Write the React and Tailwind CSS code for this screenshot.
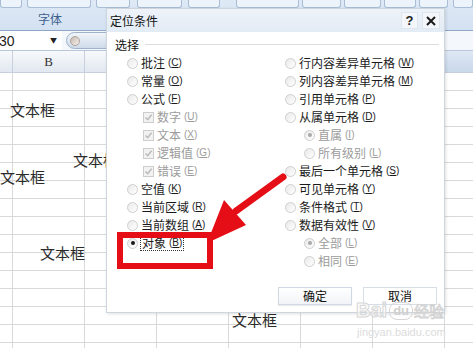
import React from "react";

const cjk = "font-['Noto_Sans_CJK_SC','Noto_Sans',sans-serif]";

function Radio({ checked, dim }) {
  return (
    <span className="w-[11px] h-[11px] shrink-0 rounded-full border border-[#cfcfcf] bg-gradient-to-br from-[#e9e9e9] to-white flex items-center justify-center">
      {checked && (
        <span className={`w-[4px] h-[4px] rounded-full ${dim ? "bg-[#a8a8a8]" : "bg-[#1a1a1a]"}`} />
      )}
    </span>
  );
}

function Check() {
  return (
    <span className="w-[11px] h-[11px] shrink-0 border border-[#cdcdcd] bg-[#f2f2f2] flex items-center justify-center">
      <svg width="9" height="9" viewBox="0 0 9 9">
        <path d="M1.5 4.5 L3.7 6.8 L7.6 1.8" fill="none" stroke="#b9b9b9" strokeWidth="1.4" />
      </svg>
    </span>
  );
}

function Key({ k }) {
  return (
    <span className="ml-[3px] text-[10px] font-['Liberation_Sans',sans-serif]">
      (<span className="underline">{k}</span>)
    </span>
  );
}

function Opt({ label, k, type = "radio", checked, dim, indent = "", focus }) {
  const color = dim ? "text-[#9c9c9c]" : "text-[#1a1a1a]";
  return (
    <div className={`flex items-center h-[18px] gap-[3px] ${indent}`}>
      {type === "radio" ? <Radio checked={checked} dim={dim} /> : <Check />}
      <span
        className={`flex items-center text-[12px] leading-[14px] ${color} ${
          focus ? "outline outline-1 outline-dotted outline-[#333] outline-offset-[0px] px-[1px]" : ""
        }`}
      >
        {label}
        <Key k={k} />
      </span>
    </div>
  );
}

function Row({ header }) {
  const base = header
    ? "h-[22px] border-b border-[#c6cfdb] bg-gradient-to-b from-[#f7f9fc] to-[#e2e8f0]"
    : "h-[18px] border-b border-[#d9d9d9]";
  const vr = header ? "border-r border-[#c6cfdb]" : "border-r border-[#d9d9d9]";
  return (
    <div className={`flex ${base}`}>
      <div className={`w-[13px] shrink-0 ${vr}`} />
      <div className={`w-[72px] shrink-0 ${vr} flex items-center justify-center`}>
        {header && (
          <span className="text-[13px] text-[#333] font-['Liberation_Serif',serif]">B</span>
        )}
      </div>
      <div className={`w-[72px] shrink-0 ${vr}`} />
      <div className={`w-[72px] shrink-0 ${vr}`} />
      <div className={`w-[72px] shrink-0 ${vr}`} />
      <div className={`w-[72px] shrink-0 ${vr}`} />
      <div className={`w-[72px] shrink-0 ${vr}`} />
      <div className={`flex-1 ${header ? "bg-gradient-to-b from-[#dfe8f4] to-[#c9d8eb]" : ""}`} />
    </div>
  );
}

export default function App() {
  const rows = Array.from({ length: 16 });
  return (
    <div className={`relative w-[473px] h-[348px] overflow-hidden bg-white ${cjk}`}>
      {/* Ribbon */}
      <div className="h-[30px] bg-gradient-to-b from-[#dfe9f6] to-[#d3e1f2] flex flex-col">
        <div className="h-[8px] flex">
          <div className="w-[22px] border border-t-0 border-[#a9bdd6] rounded-b-[3px] bg-[#edf3fa]" />
          <div className="ml-[5px] w-[65px] border border-t-0 border-[#a9bdd6] rounded-b-[3px] bg-[#edf3fa]" />
          <div className="ml-[5px] w-[34px] border border-t-0 border-[#a9bdd6] rounded-b-[3px] bg-[#edf3fa]" />
          <div className="ml-[7px] w-[46px] border border-t-0 border-[#a9bdd6] rounded-b-[3px] bg-[#edf3fa]" />
          <div className="ml-[6px] w-[32px] border border-t-0 border-[#a9bdd6] rounded-b-[3px] bg-[#edf3fa]" />
          <div className="ml-[16px] w-[64px] border border-t-0 border-[#a9bdd6] rounded-b-[3px] bg-[#edf3fa]" />
          <div className="ml-[3px] w-[40px] border border-t-0 border-[#a9bdd6] rounded-b-[3px] bg-[#edf3fa]" />
          <div className="ml-[3px] w-[37px] border border-t-0 border-[#a9bdd6] rounded-b-[3px] bg-[#edf3fa]" />
          <div className="ml-[3px] w-[32px] border border-t-0 border-[#a9bdd6] rounded-b-[3px] bg-[#edf3fa]" />
          <div className="ml-[3px] w-[30px] border border-t-0 border-[#a9bdd6] rounded-b-[3px] bg-[#edf3fa]" />
          <div className="ml-[5px] w-[20px] border border-t-0 border-[#a9bdd6] rounded-b-[3px] bg-[#edf3fa]" />
        </div>
        <div className="h-[22px] flex items-center pl-[38px]">
          <span className="text-[12px] leading-[14px] text-[#3e5f8c]">字体</span>
        </div>
      </div>
      <div className="h-px bg-[#8ea7c6]" />
      {/* Formula bar */}
      <div className="h-[19px] flex items-center bg-[#f4f7fb]">
        <div className="w-[62px] h-full bg-white flex items-center">
          <span className="text-[14px] leading-[16px] text-[#222] font-['Liberation_Sans',sans-serif] -ml-[1px]">
            30
          </span>
          <span className="ml-auto mr-[5px] text-[7px] text-[#222]">▼</span>
        </div>
        <div className="ml-[4px] w-[70px] h-[17px] rounded-full border border-[#9fb2cb] bg-gradient-to-b from-[#f1f5fa] to-[#cfdbea] flex items-center pl-[3px]">
          <span className="w-[10px] h-[10px] rounded-full bg-gradient-to-br from-[#c7b9b0] to-[#f6f2ee] border border-[#b0a39a]" />
        </div>
      </div>
      <div className="h-px bg-[#b8c6d8]" />
      {/* Grid */}
      <Row header />
      {rows.map((_, i) => (
        <Row key={i} />
      ))}

      {/* Floating text boxes on the sheet */}
      <span className="absolute left-[10px] top-[101px] text-[15px] leading-[18px] text-[#2a2a2a]">文本框</span>
      <span className="absolute left-[73px] top-[151px] text-[15px] leading-[18px] text-[#2a2a2a]">文本框</span>
      <span className="absolute left-[0px] top-[168px] text-[15px] leading-[18px] text-[#2a2a2a]">文本框</span>
      <span className="absolute left-[40px] top-[244px] text-[15px] leading-[18px] text-[#2a2a2a]">文本框</span>
      <span className="absolute left-[232px] top-[311px] text-[15px] leading-[18px] text-[#2a2a2a]">文本框</span>

      {/* Dialog */}
      <div className="absolute left-[106px] top-[8px] w-[339px] h-[305px] bg-white border border-[#cdd5de] shadow-[1px_1px_3px_rgba(0,0,0,0.12)] flex flex-col z-10">
        <div className="h-[23px] bg-gradient-to-b from-[#eef3f9] to-[#e3ebf5] flex items-center pl-[3px] pr-[4px]">
          <span className="text-[12px] leading-[14px] text-[#111]">定位条件</span>
          <div className="ml-auto flex gap-[4px]">
            <span className="w-[17px] h-[17px] flex items-center justify-center text-[13px] font-bold text-[#222] font-['Liberation_Sans',sans-serif] border border-[#dfe6ee] bg-[#f3f6fa]">
              ?
            </span>
            <span className="w-[18px] h-[17px] flex items-center justify-center border border-[#dfe6ee] bg-[#f3f6fa]">
              <svg width="10" height="10" viewBox="0 0 10 10">
                <path d="M1 1 L9 9 M9 1 L1 9" stroke="#1a1a1a" strokeWidth="2" />
              </svg>
            </span>
          </div>
        </div>
        <div className="mt-[5px] h-[16px] flex items-center pl-[8px] pr-[5px]">
          <span className="text-[12px] leading-[14px] text-[#111]">选择</span>
          <div className="flex-1 h-px bg-[#dedede] ml-[6px] -mt-[2px]" />
        </div>
        <div className="mt-[1px] flex">
          <div className="w-[178px] pl-[20px] flex flex-col">
            <Opt label="批注" k="C" />
            <Opt label="常量" k="O" />
            <Opt label="公式" k="F" />
            <Opt label="数字" k="U" type="check" dim indent="pl-[16px]" />
            <Opt label="文本" k="X" type="check" dim indent="pl-[16px]" />
            <Opt label="逻辑值" k="G" type="check" dim indent="pl-[16px]" />
            <Opt label="错误" k="E" type="check" dim indent="pl-[16px]" />
            <Opt label="空值" k="K" />
            <Opt label="当前区域" k="R" />
            <Opt label="当前数组" k="A" />
            <Opt label="对象" k="B" checked focus />
          </div>
          <div className="flex-1 flex flex-col">
            <Opt label="行内容差异单元格" k="W" />
            <Opt label="列内容差异单元格" k="M" />
            <Opt label="引用单元格" k="P" />
            <Opt label="从属单元格" k="D" />
            <Opt label="直属" k="I" checked dim indent="pl-[19px]" />
            <Opt label="所有级别" k="L" dim indent="pl-[19px]" />
            <Opt label="最后一个单元格" k="S" />
            <Opt label="可见单元格" k="Y" />
            <Opt label="条件格式" k="T" />
            <Opt label="数据有效性" k="V" />
            <Opt label="全部" k="L" checked dim indent="pl-[19px]" />
            <Opt label="相同" k="E" dim indent="pl-[19px]" />
          </div>
        </div>
        <div className="mt-[17px] flex justify-end gap-[11px] pr-[7px]">
          <button className="w-[74px] h-[18px] border border-[#cfd9e3] bg-gradient-to-b from-white to-[#f1f4f7] shadow-[0_1px_1px_rgba(0,0,0,0.08)] text-[12px] leading-[14px] text-[#111] flex items-center justify-center">
            确定
          </button>
          <button className="w-[74px] h-[18px] border border-[#d7dee6] bg-white text-[12px] leading-[14px] text-[#111] flex items-center justify-center">
            取消
          </button>
        </div>
      </div>

      {/* Red annotation */}
      <div className="absolute left-[117px] top-[232px] w-[96px] h-[37px] border-[6px] border-[#e50d16] z-20" />
      <svg className="absolute left-0 top-0 z-20 pointer-events-none" width="473" height="348" viewBox="0 0 473 348">
        <line x1="283" y1="177" x2="236" y2="211" stroke="#e50d16" strokeWidth="7" strokeLinecap="round" />
        <polygon points="224,200 246,225 207,243" fill="#e50d16" />
      </svg>

      {/* Watermark */}
      <div className="absolute left-[356px] top-[300px] z-30 flex items-end pointer-events-none">
        <span className="text-[20px] leading-[20px] font-bold text-white/60 font-['Liberation_Sans',sans-serif] [-webkit-text-stroke:1px_#d6d6d6]">
          Bai
        </span>
        <span className="ml-[2px] px-[3px] rounded-[8px] border border-[#d6d6d6] text-[13px] leading-[16px] font-bold text-[#d0d0d0] font-['Liberation_Sans',sans-serif]">
          du
        </span>
        <span className="ml-[1px] text-[15px] leading-[18px] text-white/60 [-webkit-text-stroke:0.8px_#d0d0d0]">经验</span>
      </div>
      <span className="absolute left-[357px] top-[326px] z-30 text-[11px] leading-[12px] text-[#dcdcdc] font-['Liberation_Sans',sans-serif]">
        jingyan.baidu.com
      </span>
    </div>
  );
}
